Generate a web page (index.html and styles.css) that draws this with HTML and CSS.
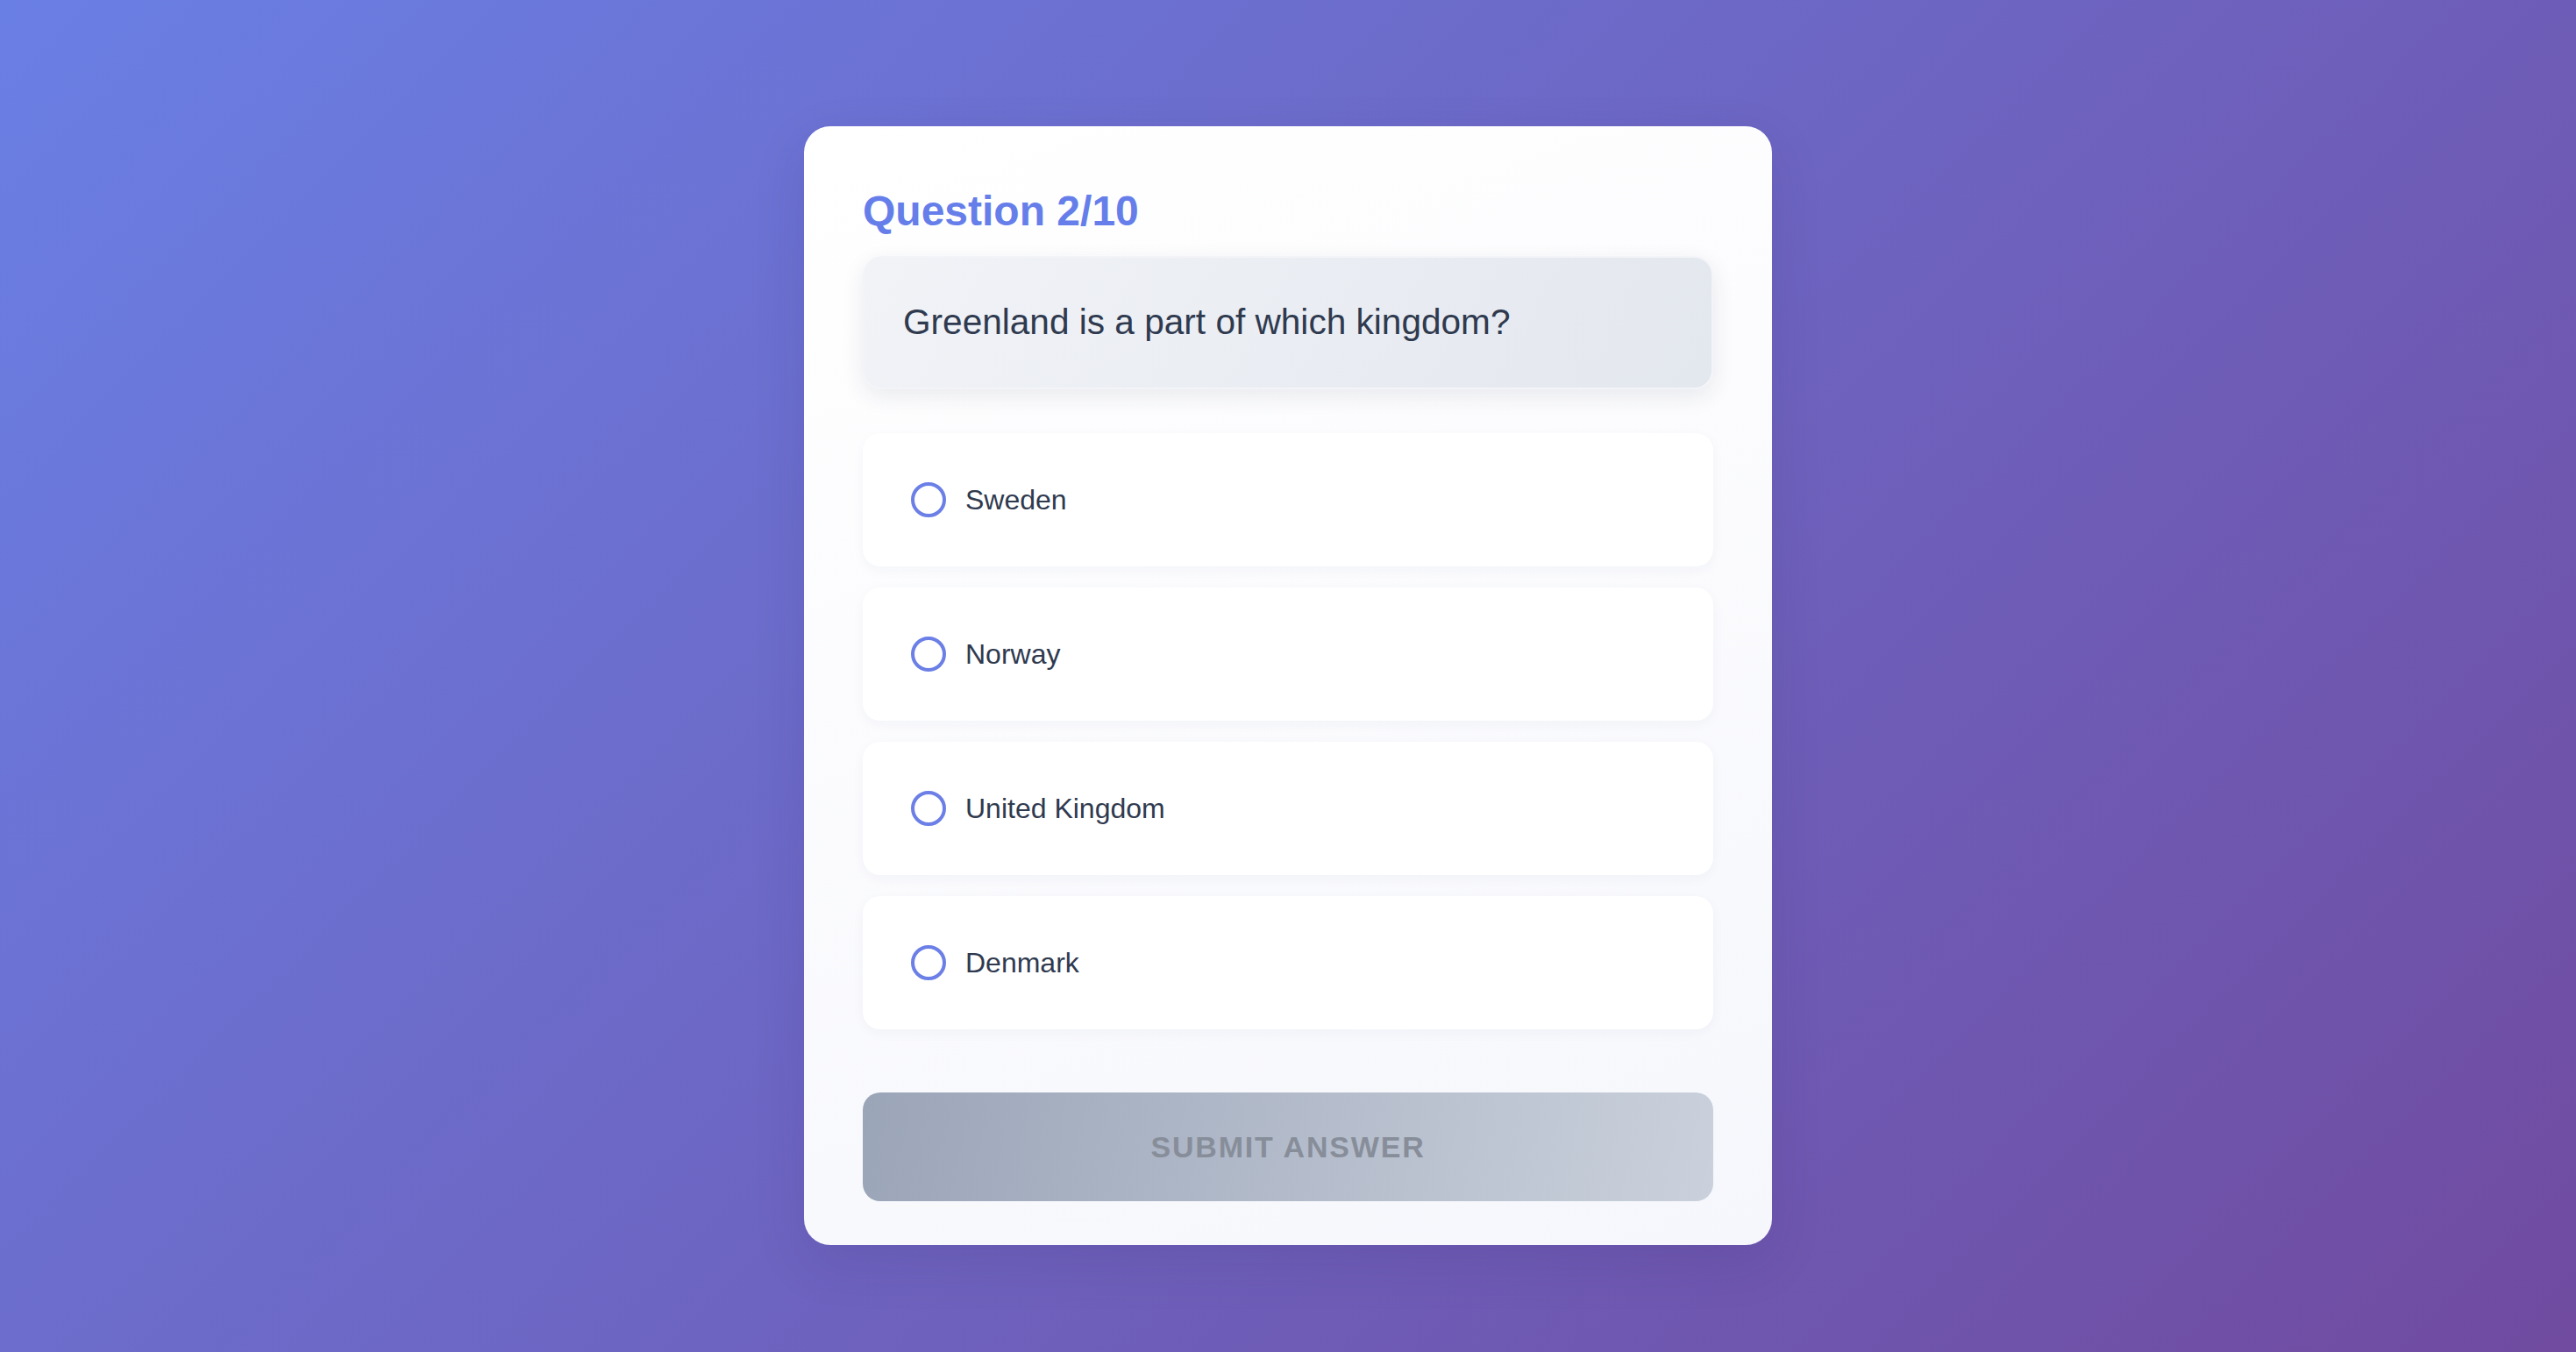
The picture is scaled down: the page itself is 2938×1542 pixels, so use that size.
FILE: index.html
```html
<!DOCTYPE html>
<html lang="en">
<head>
<meta charset="utf-8">
<title>Quiz</title>
<link rel="stylesheet" href="styles.css">
</head>
<body>
  <main class="quiz-card">
    <h1 class="quiz-title">Question 2/10</h1>
    <div class="question-box">Greenland is a part of which kingdom?</div>
    <ul class="options">
      <li class="option"><span class="radio"></span><span class="option-label">Sweden</span></li>
      <li class="option"><span class="radio"></span><span class="option-label">Norway</span></li>
      <li class="option"><span class="radio"></span><span class="option-label">United Kingdom</span></li>
      <li class="option"><span class="radio"></span><span class="option-label">Denmark</span></li>
    </ul>
    <button class="submit-btn" disabled>Submit Answer</button>
  </main>
</body>
</html>
```

FILE: styles.css
```css
* {
  box-sizing: border-box;
}

html, body {
  margin: 0;
  padding: 0;
}

body {
  min-height: 100vh;
  background: linear-gradient(135deg, #6a7fe4 0%, #704ba0 100%);
  font-family: "Liberation Sans", Arial, Helvetica, sans-serif;
  display: flex;
  justify-content: center;
  align-items: flex-start;
  padding-top: 144px;
}

.quiz-card {
  width: 1104px;
  background: linear-gradient(160deg, #ffffff 0%, #f6f7fc 100%);
  border-radius: 30px;
  padding: 68px 67px 50px;
  box-shadow: 0 20px 60px rgba(40, 30, 90, 0.12);
  display: flex;
  flex-direction: column;
}

.quiz-title {
  margin: 0 0 22px;
  font-size: 48px;
  line-height: 58px;
  font-weight: 700;
  color: #667eea;
}

.question-box {
  height: 152px;
  display: flex;
  align-items: center;
  padding: 0 44px 2px;
  border: 2px solid #f2f4f8;
  border-radius: 22px;
  background: linear-gradient(120deg, #f1f3f7 0%, #e3e7ee 100%);
  box-shadow: 0 8px 26px rgba(30, 40, 70, 0.09);
  font-size: 40.6px;
  color: #2f3a4f;
}

.options {
  list-style: none;
  margin: 50px 0 0;
  padding: 0;
  display: flex;
  flex-direction: column;
  gap: 24px;
}

.option {
  height: 152px;
  display: flex;
  align-items: center;
  gap: 22px;
  padding: 0 55px;
  background: #ffffff;
  border-radius: 20px;
  box-shadow: 0 4px 14px rgba(30, 40, 90, 0.04);
}

.radio {
  width: 40px;
  height: 40px;
  border: 4px solid #6b7fe6;
  border-radius: 50%;
  flex: none;
}

.option-label {
  font-size: 32px;
  color: #2f3a4f;
}

.submit-btn {
  margin-top: 72px;
  height: 124px;
  border: none;
  border-radius: 20px;
  background: linear-gradient(100deg, #9ba5b8 0%, #cad1dc 100%);
  color: #878e9a;
  font-family: "Liberation Sans", Arial, Helvetica, sans-serif;
  font-size: 34px;
  font-weight: 700;
  letter-spacing: 1.8px;
  text-transform: uppercase;
  cursor: not-allowed;
}
```
